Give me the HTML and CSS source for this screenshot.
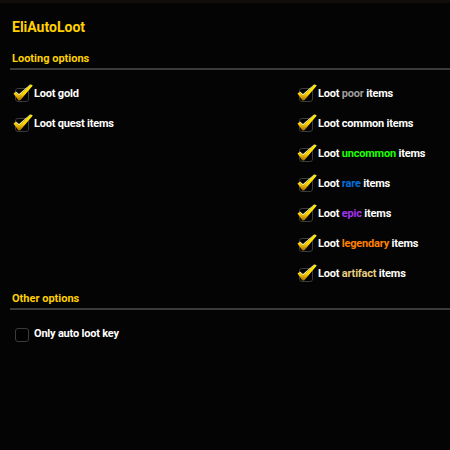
FILE: index.html
```html
<!DOCTYPE html>
<html>
<head>
<meta charset="utf-8">
<link rel="stylesheet" href="styles.css">
</head>
<body>
<div class="strip"></div>
<div class="panel">
  <div class="title">EliAutoLoot</div>
  <div class="section-head">Looting options</div>
  <div class="rule"></div>
  <div class="cols">
    <div class="col">
      <div class="row"><span class="cb on"></span><span class="lbl">Loot gold</span></div>
      <div class="row"><span class="cb on"></span><span class="lbl">Loot quest items</span></div>
    </div>
    <div class="col right">
      <div class="row"><span class="cb on"></span><span class="lbl">Loot <span class="poor">poor</span> items</span></div>
      <div class="row"><span class="cb on"></span><span class="lbl">Loot common items</span></div>
      <div class="row"><span class="cb on"></span><span class="lbl">Loot <span class="uncommon">uncommon</span> items</span></div>
      <div class="row"><span class="cb on"></span><span class="lbl">Loot <span class="rare">rare</span> items</span></div>
      <div class="row"><span class="cb on"></span><span class="lbl">Loot <span class="epic">epic</span> items</span></div>
      <div class="row"><span class="cb on"></span><span class="lbl">Loot <span class="legendary">legendary</span> items</span></div>
      <div class="row"><span class="cb on"></span><span class="lbl">Loot <span class="artifact">artifact</span> items</span></div>
    </div>
  </div>
  <div class="section-head second">Other options</div>
  <div class="rule"></div>
  <div class="cols">
    <div class="col">
      <div class="row"><span class="cb"></span><span class="lbl">Only auto loot key</span></div>
    </div>
  </div>
</div>
<svg width="0" height="0" style="position:absolute">
  <defs>
    <linearGradient id="g" x1="0" y1="0" x2="0" y2="1">
      <stop offset="0" stop-color="#fff200"/>
      <stop offset="0.6" stop-color="#ffd000"/>
      <stop offset="1" stop-color="#a06a00"/>
    </linearGradient>
    <symbol id="chk" viewBox="0 0 20 18">
      <polygon points="0.5,9.5 2.5,8 6,11.5 18,0.5 19.8,1.6 7.2,16.5 5.4,16.5" fill="url(#g)"/>
      <polygon points="2.5,8 6,11.5 18,0.5 17,0.6 6,10 3,7.6" fill="#fffbb0"/>
    </symbol>
  </defs>
</svg>
<script>
document.querySelectorAll('.cb.on').forEach(function(e){
  e.innerHTML='<svg class="mark" width="20" height="18"><use href="#chk"/></svg>';
});
</script>
</body>
</html>
```
FILE: styles.css
```css
html, body {
  margin: 0;
  padding: 0;
  background: #050404;
  width: 450px;
  height: 450px;
  overflow: hidden;
  font-family: Roboto, "DejaVu Sans Condensed", sans-serif;
  font-weight: bold;
}
.strip {
  height: 3px;
  background: #120d08;
}
.panel {
  padding-left: 10px;
}
.title {
  color: #ffd100;
  font-size: 14px;
  line-height: 20px;
  margin-top: 14px;
  padding-left: 2px;
}
.section-head {
  color: #ffd100;
  font-size: 11px;
  line-height: 14px;
  margin-top: 15px;
  padding-left: 2px;
}
.section-head.second {
  margin-top: 4px;
}
.rule {
  height: 2px;
  background: #3a3a3a;
  margin-top: 2px;
}
.cols {
  display: grid;
  grid-template-columns: 284px 1fr;
  padding-top: 8px;
}
.row {
  display: flex;
  align-items: center;
  height: 30px;
  padding-left: 5px;
  white-space: nowrap;
}
.cb {
  position: relative;
  width: 12px;
  height: 12px;
  border: 1px solid #3c3c3c;
  border-radius: 3px;
  background: #000;
  flex: none;
  margin-top: 4px;
}
.mark {
  position: absolute;
  left: -3px;
  top: -5px;
}
.lbl {
  color: #fff;
  font-size: 11px;
  margin-left: 5px;
  letter-spacing: -0.2px;
}
.poor { color: #9d9d9d; }
.uncommon { color: #1eff00; }
.rare { color: #0070dd; }
.epic { color: #a335ee; }
.legendary { color: #ff8000; }
.artifact { color: #e6cc80; }
```
